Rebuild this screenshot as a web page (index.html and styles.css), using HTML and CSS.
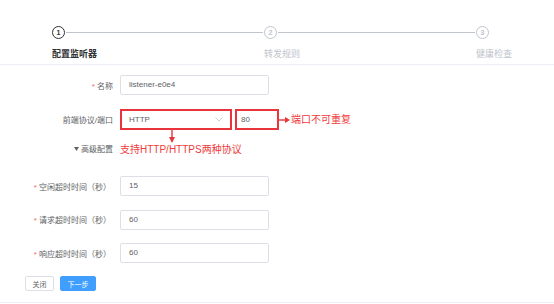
FILE: index.html
```html
<!DOCTYPE html>
<html lang="zh">
<head>
  <meta charset="UTF-8">
  <title>添加监听器</title>
  <link rel="stylesheet" href="styles.css">
</head>
<body>
  <!-- Steps header -->
  <div class="steps">
    <div class="step active">
      <div class="step-head"><span class="step-icon">1</span><span class="step-line"></span></div>
      <div class="step-title">配置监听器</div>
    </div>
    <div class="step">
      <div class="step-head"><span class="step-icon">2</span><span class="step-line"></span></div>
      <div class="step-title">转发规则</div>
    </div>
    <div class="step last">
      <div class="step-head"><span class="step-icon">3</span></div>
      <div class="step-title">健康检查</div>
    </div>
  </div>

  <!-- Form -->
  <div class="form">
    <div class="row row-name">
      <label class="label"><span class="req">*</span> 名称</label>
      <div class="input">listener-e0e4</div>
    </div>

    <div class="row row-proto">
      <label class="label">前端协议/端口</label>
      <div class="select hl">
        <span>HTTP</span>
        <svg class="chev" width="8" height="5" viewBox="0 0 8 5"><path d="M0.5 0.5 L4 4 L7.5 0.5" fill="none" stroke="#c0c4cc" stroke-width="0.8"/></svg>
      </div>
      <div class="port hl">80</div>
      <svg class="arrow-right" width="11" height="8" viewBox="0 0 11 8"><path d="M0 4 H7" stroke="#e8343a" stroke-width="1.4"/><path d="M6 1 L11 4 L6 7 Z" fill="#e8343a"/></svg>
      <span class="note">端口不可重复</span>
    </div>

    <div class="row row-adv">
      <div class="label adv"><svg class="caret" width="5" height="4" viewBox="0 0 5 4"><path d="M0 0 H5 L2.5 4 Z" fill="#606266"/></svg> 高级配置</div>
      <div class="adv-note">
        <svg class="arrow-down" width="8" height="13" viewBox="0 0 8 13"><path d="M4 0 V8" stroke="#e8343a" stroke-width="1.4"/><path d="M1 7 L4 13 L7 7 Z" fill="#e8343a"/></svg>
        <span class="note">支持HTTP/HTTPS两种协议</span>
      </div>
    </div>

    <div class="row row-time first">
      <label class="label"><span class="req">*</span> 空闲超时时间（秒）</label>
      <div class="input">15</div>
    </div>
    <div class="row row-time">
      <label class="label"><span class="req">*</span> 请求超时时间（秒）</label>
      <div class="input">60</div>
    </div>
    <div class="row row-time">
      <label class="label"><span class="req">*</span> 响应超时时间（秒）</label>
      <div class="input">60</div>
    </div>

    <div class="actions">
      <button class="btn">关闭</button>
      <button class="btn primary">下一步</button>
    </div>
  </div>
</body>
</html>
```

FILE: styles.css
```css
body {
  margin: 0;
  background: #fff;
  font-family: "Liberation Sans", "Noto Sans CJK SC", sans-serif;
  color: #606266;
  height: 304px;
  overflow: hidden;
}

/* steps */
.steps {
  display: flex;
  padding: 26px 0 0 52px;
  height: 38px;
  border-bottom: 1px solid #ebeef5;
}
.step {
  width: 212px;
  flex-shrink: 0;
}
.step.last {
  width: auto;
}
.step-head {
  display: flex;
  align-items: center;
  height: 12px;
}
.step-icon {
  width: 11px;
  height: 11px;
  border: 1px solid #c0c4cc;
  border-radius: 50%;
  font-size: 7px;
  line-height: 11px;
  text-align: center;
  color: #c0c4cc;
  font-weight: bold;
  flex-shrink: 0;
}
.step-line {
  flex: 1;
  height: 1px;
  background: #c0c4cc;
  margin: 0 1px;
}
.step-title {
  margin-top: 9px;
  font-size: 9px;
  color: #c0c4cc;
}
.step.active .step-icon {
  border-color: #303133;
  color: #303133;
}
.step.active .step-title {
  color: #303133;
  font-weight: bold;
}

/* form */
.form {
  padding-top: 10px;
}
.row {
  display: flex;
  align-items: center;
}
.label {
  width: 113px;
  padding-right: 7px;
  text-align: right;
  font-size: 8px;
  color: #606266;
  flex-shrink: 0;
}
.req {
  color: #f56c6c;
}
.input {
  box-sizing: border-box;
  width: 149px;
  height: 20px;
  border: 1px solid #dcdfe6;
  border-radius: 2px;
  padding-left: 8px;
  font-size: 8px;
  line-height: 18px;
  color: #606266;
}
.row-proto {
  margin-top: 14px;
}
.hl {
  box-sizing: border-box;
  border: 2px solid #e8343a;
  height: 21px;
  font-size: 8px;
  color: #606266;
}
.select {
  width: 112px;
  display: flex;
  align-items: center;
  justify-content: space-between;
  padding: 0 7px 0 7px;
}
.chev {
  display: block;
}
.port {
  width: 44px;
  margin-left: 3px;
  padding-left: 4px;
  line-height: 17px;
}
.arrow-right {
  display: block;
  margin-left: 0;
}
.note {
  color: #f03a3a;
  font-size: 10px;
  line-height: 14px;
}
.row-proto .note {
  margin-left: 1px;
}
.row-adv {
  align-items: flex-end;
}
.adv {
  line-height: 14px;
}
.caret {
  vertical-align: 1px;
}
.adv-note {
  display: flex;
  flex-direction: column;
  align-items: flex-start;
}
.arrow-down {
  display: block;
  margin-left: 48px;
}
.row-time {
  margin-top: 13.5px;
}
.row-time.first {
  margin-top: 19px;
}
.row-time .label {
  width: 111px;
  padding-right: 9px;
}

/* buttons */
.actions {
  display: flex;
  gap: 6px;
  margin-top: 13px;
  padding-left: 25px;
  padding-bottom: 11px;
  border-bottom: 1px solid #ebeef5;
}
.btn {
  height: 15px;
  padding: 0;
  font-size: 7px;
  font-family: inherit;
  border-radius: 2px;
  cursor: pointer;
  width: 29px;
  border: 1px solid #dcdfe6;
  background: #fff;
  color: #606266;
}
.btn.primary {
  width: 36px;
  border-color: #409eff;
  background: #409eff;
  color: #fff;
}
```
